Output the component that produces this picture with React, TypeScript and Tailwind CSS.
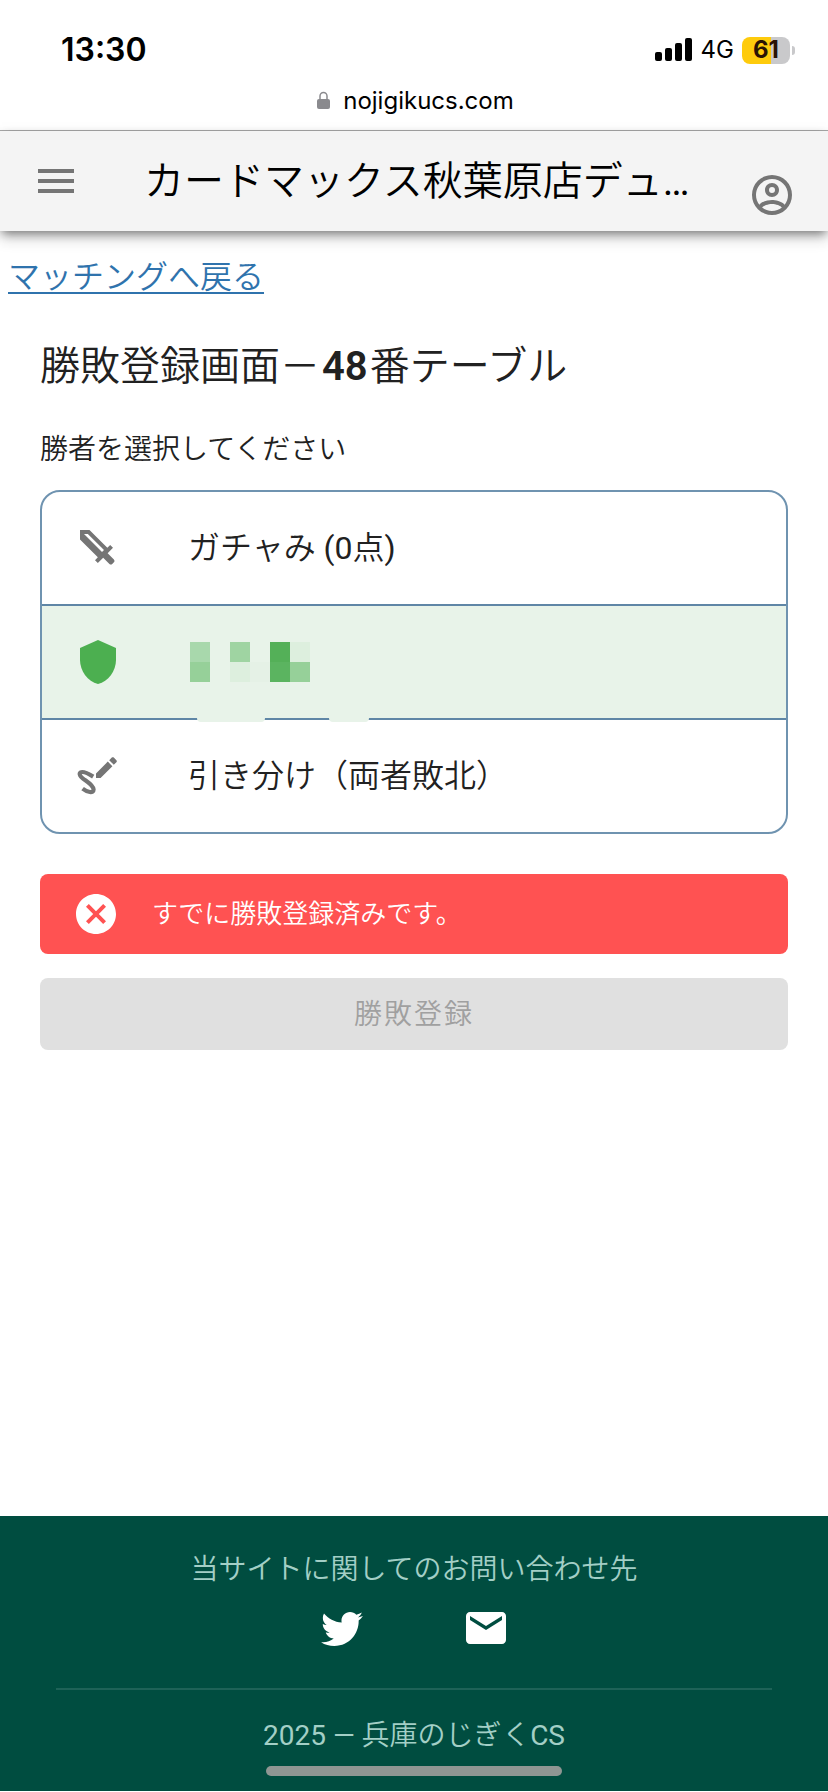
import { useState } from 'react';
import { MdEmail, MdMenu } from 'react-icons/md';

const ICONS = {
  account:
    'M12,2A10,10 0 0,0 2,12A10,10 0 0,0 12,22A10,10 0 0,0 22,12A10,10 0 0,0 12,2M7.07,18.28C7.5,17.38 10.12,16.5 12,16.5C13.88,16.5 16.5,17.38 16.93,18.28C15.57,19.36 13.86,20 12,20C10.14,20 8.43,19.36 7.07,18.28M18.36,16.83C16.93,15.09 13.46,14.5 12,14.5C10.54,14.5 7.07,15.09 5.64,16.83C4.62,15.5 4,13.82 4,12C4,7.59 7.59,4 12,4C16.41,4 20,7.59 20,12C20,13.82 19.38,15.5 18.36,16.83M12,6C10.06,6 8.5,7.56 8.5,9.5C8.5,11.44 10.06,13 12,13C13.94,13 15.5,11.44 15.5,9.5C15.5,7.56 13.94,6 12,6M12,11A1.5,1.5 0 0,1 10.5,9.5A1.5,1.5 0 0,1 12,8A1.5,1.5 0 0,1 13.5,9.5A1.5,1.5 0 0,1 12,11Z',
  sword:
    'M6.92,5H5L14,14L15,13.06M19.96,19.12L19.12,19.96C18.73,20.35 18.1,20.35 17.71,19.96L14.59,16.84L11.91,19.5L10.5,18.09L11.92,16.67L3,7.75V3H7.75L16.67,11.92L18.09,10.5L19.5,11.91L16.83,14.58L19.95,17.7C20.35,18.1 20.35,18.73 19.96,19.12Z',
  shield: 'M12,1L3,5V11C3,16.55 6.84,21.74 12,23C17.16,21.74 21,16.55 21,11V5L12,1Z',
  closeCircle:
    'M12,2C17.53,2 22,6.47 22,12C22,17.53 17.53,22 12,22C6.47,22 2,17.53 2,12C2,6.47 6.47,2 12,2M15.59,7L12,10.59L8.41,7L7,8.41L10.59,12L7,15.59L8.41,17L12,13.41L15.59,17L17,15.59L13.41,12L17,8.41L15.59,7Z',
  twitter:
    'M22.46,6C21.69,6.35 20.86,6.58 20,6.69C20.88,6.16 21.56,5.32 21.88,4.31C21.05,4.81 20.13,5.16 19.16,5.36C18.37,4.5 17.26,4 16,4C13.65,4 11.73,5.92 11.73,8.29C11.73,8.63 11.77,8.96 11.84,9.27C8.28,9.09 5.11,7.38 3,4.79C2.63,5.42 2.42,6.16 2.42,6.94C2.42,8.43 3.17,9.75 4.33,10.5C3.62,10.5 2.96,10.3 2.38,10V10.03C2.38,12.11 3.86,13.85 5.82,14.24C5.19,14.41 4.53,14.44 3.89,14.31C4.43,16 6,17.26 7.89,17.29C6.43,18.45 4.58,19.13 2.56,19.13C2.22,19.13 1.88,19.11 1.54,19.07C3.44,20.29 5.7,21 8.12,21C16,21 20.33,14.46 20.33,8.79C20.33,8.6 20.33,8.42 20.32,8.23C21.16,7.63 21.88,6.87 22.46,6Z',
};

function Icon({ path, className }: { path: string; className?: string }) {
  return (
    <svg viewBox="0 0 24 24" fill="currentColor" fillRule="evenodd" className={`size-12 shrink-0 ${className ?? ''}`}>
      <path d={path} />
    </svg>
  );
}

function DrawIcon() {
  return (
    <svg viewBox="0 0 24 24" fill="currentColor" className="size-12 shrink-0 text-[#757575]">
      <path
        d="M9.6 12.3C7.5 11 4.6 9.6 3.3 10.2C2.3 10.9 3.2 12.3 4.5 13.3C6.5 14.8 9.7 16.6 9.8 18.7C9.8 20.9 6.6 20.1 4.3 18.3"
        fill="none"
        stroke="currentColor"
        strokeWidth="2.1"
      />
      <path d="M11 10.7L16.9 4.8L19.2 7.1L13.3 13H11ZM17.6 4.1L18.9 2.8C19.2 2.5 19.6 2.5 19.9 2.8L21.2 4.1C21.5 4.4 21.5 4.8 21.2 5.1L19.9 6.4Z" />
    </svg>
  );
}

// censored player name, two rows of blocks
const MOSAIC = [
  ['bg-[#a8d8ac]', '', 'bg-[#9fd4a2]', '', 'bg-[#54b058]', 'bg-[#ddefde]'],
  ['bg-[#96d099]', '', 'bg-[#ddefde]', 'bg-[#e5f1e6]', 'bg-[#5bb460]', 'bg-[#96d099]'],
];

function Mosaic() {
  return (
    <span className="ml-[2px] grid grid-cols-[repeat(6,20px)]">
      {MOSAIC.flat().map((color, i) => (
        <span key={i} className={`h-5 ${color}`} />
      ))}
    </span>
  );
}

function StatusBar() {
  return (
    <div className="flex h-[100px] items-center justify-between pr-[33px] pl-[61px] font-['Inter',sans-serif] font-normal text-black">
      <span className="text-[32px] leading-none font-semibold">13:30</span>
      <div className="flex items-center gap-2">
        <svg viewBox="0 0 38 24" className="h-6 w-[38px]">
          <rect x="0" y="14" width="7" height="9" rx="2" />
          <rect x="10" y="10" width="7" height="13" rx="2" />
          <rect x="20" y="5" width="7" height="18" rx="2" />
          <rect x="30" y="0" width="7" height="23" rx="2" />
        </svg>
        <span className="text-2xl leading-none">4G</span>
        <div className="flex items-center gap-[2px]">
          <span className="flex h-[27px] w-12 items-center justify-center rounded-lg bg-linear-to-r from-[#fecb0c] from-61% to-[#c9c9cb] to-61% text-2xl leading-none font-bold text-[#2a1304]">
            61
          </span>
          <span className="h-[9px] w-[3px] rounded-r-full bg-[#c9c9cb]" />
        </div>
      </div>
    </div>
  );
}

export default function App() {
  const [winner, setWinner] = useState('shield');

  const rowClass = (key: string) =>
    `flex w-full items-center gap-[66px] py-8 pl-8 text-left text-[32px] leading-[48px] ${winner === key ? 'bg-[#e8f3e9]' : ''}`;

  return (
    <div className="flex min-h-screen flex-col bg-white font-['Roboto','Noto_Sans_CJK_JP',sans-serif] font-[350] text-[#212121]">
      <StatusBar />
      <div className="flex h-[31px] items-start justify-center gap-3 border-b border-[#a9a9a9] pl-[3px]">
        <svg viewBox="0 0 14 18" className="-mt-[9px] h-[18px] w-[14px]">
          <rect x="0" y="8" width="13" height="10" rx="2" fill="#8a8a8e" />
          <path d="M3 8V5a3.5 3.5 0 0 1 7 0v3" fill="none" stroke="#8a8a8e" strokeWidth="1.5" />
        </svg>
        <span className="-mt-[11px] font-['Inter',sans-serif] text-2xl leading-none font-normal text-black">
          nojigikucs.com
        </span>
      </div>

      <header className="flex h-[100px] items-center bg-[#f4f4f4] px-8 shadow-[0_4px_10px_-2px_rgba(0,0,0,0.5),0_8px_14px_0_rgba(0,0,0,0.14)]">
        <button aria-label="メニュー" className="shrink-0 text-[#757575]">
          <MdMenu className="size-12" />
        </button>
        <div className="ml-16 flex-1 pt-[2px] text-[40px] leading-none whitespace-nowrap text-black">
          カードマックス秋葉原店デュ<span className="font-normal">…</span>
        </div>
        <button aria-label="アカウント" className="shrink-0 self-end pb-3 text-[#757575]">
          <Icon path={ICONS.account} />
        </button>
      </header>

      <main className="flex-1">
        <div className="px-2 pt-[26px]">
          <a href="#" className="text-[32px] leading-10 text-[#2f73ad] underline decoration-2 underline-offset-4">
            マッチングへ戻る
          </a>
        </div>
        <div className="px-10">
          <h1 className="mt-10 text-[40px] leading-[60px]">
            勝敗登録画面－<b className="mx-[2px] font-semibold">48</b>番テーブル
          </h1>
          <p className="mt-[33px] text-[28px] leading-10">勝者を選択してください</p>

          <div className="relative mt-5">
            <div className="divide-y-2 divide-[#5f86a6] overflow-hidden rounded-[20px] border-2 border-[#6f93b0]">
              <button className={rowClass('sword')} onClick={() => setWinner('sword')}>
                <Icon path={ICONS.sword} className="text-[#757575]" />
                <span>
                  ガチャみ <span className="font-normal">(0</span>点<span className="font-normal">)</span>
                </span>
              </button>
              <button
                className={rowClass('shield')}
                aria-label="対戦相手"
                onClick={() => setWinner('shield')}
              >
                <Icon path={ICONS.shield} className="text-[#4caf50]" />
                <Mosaic />
              </button>
              <button className={rowClass('draw')} onClick={() => setWinner('draw')}>
                <DrawIcon />
                <span>引き分け（両者敗北）</span>
              </button>
            </div>
            {/* rest of the censor strokes, over the divider */}
            <span className="absolute top-[227px] left-[157px] h-[5px] w-[68px] rounded-b-sm bg-[#e8f3e9]" />
            <span className="absolute top-[227px] left-[289px] h-[5px] w-10 rounded-b-sm bg-[#e8f3e9]" />
          </div>

          <div role="alert" className="mt-10 flex h-20 items-center gap-8 rounded-lg bg-[#ff5252] pl-8 text-[26px] text-white">
            <Icon path={ICONS.closeCircle} />
            <span>すでに勝敗登録済みです。</span>
          </div>
          <button disabled className="mt-6 h-[72px] w-full rounded-lg bg-[#e0e0e0] pt-[2px] text-[28px] tracking-[2px] text-[#a0a0a0]">
            勝敗登録
          </button>
        </div>
      </main>

      <footer className="flex flex-col items-center border-b border-white bg-[#004d40] text-[28px] text-[#a3cfc6]">
        <p className="mt-[34px] leading-10">当サイトに関してのお問い合わせ先</p>
        <div className="mt-[14px] flex text-white">
          <a href="#" aria-label="Twitter" className="flex w-36 justify-center">
            <Icon path={ICONS.twitter} />
          </a>
          <a href="#" aria-label="メール" className="flex w-36 justify-center">
            <MdEmail className="size-12" />
          </a>
        </div>
        <div className="mt-9 w-full px-14">
          <hr className="border-t-2 border-[#1e6257]" />
        </div>
        <p className="mt-[26px] leading-10">
          <span className="font-normal">2025 —</span> 兵庫のじぎく<span className="font-normal">CS</span>
        </p>
        <div className="mt-[10px] mb-[15px] h-[10px] w-[296px] rounded-full bg-[#8f9693]" />
      </footer>
    </div>
  );
}
